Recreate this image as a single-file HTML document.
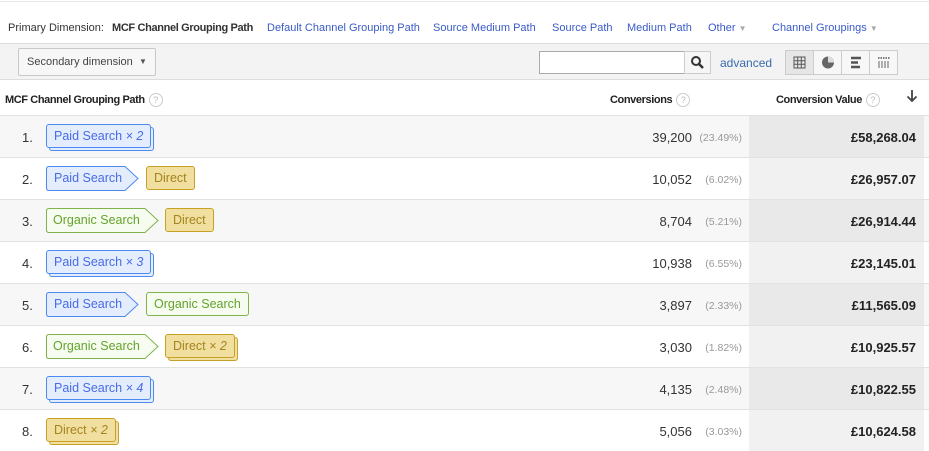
<!DOCTYPE html>
<html><head><meta charset="utf-8"><style>
*{margin:0;padding:0;box-sizing:border-box}
body{width:929px;height:450px;overflow:hidden;background:#fff;font-family:"Liberation Sans",Arial,sans-serif;font-size:11px;color:#222;position:relative}
.a{position:absolute;white-space:nowrap}
.lnk{color:#3a5bc7;font-size:11px}
.row{position:absolute;left:0;width:929px;height:42px;border-top:1px solid #e2e2e2}
.num{position:absolute;left:22px;top:14px;font-size:13px;color:#333}
.cv{position:absolute;right:237px;top:14px;font-size:13px;color:#333}
.pc{position:absolute;right:187px;top:16px;font-size:10.5px;color:#999}
.vb{position:absolute;left:749px;top:0;width:175px;height:41px}
.val{position:absolute;right:13px;top:14px;font-size:13px;font-weight:bold;color:#222}
.chip{position:absolute;top:8px;height:24px;border-radius:3px;border:1px solid;font-size:12.5px;line-height:23px;padding:0 7px}
.b{background:#e3edfd;border-color:#4d8af0;color:#4a6be6}
.g{background:#f6fcef;border-color:#80b34b;color:#64a22c}
.d{background:#f1df9f;border-color:#c7a125;color:#a5841f}
.b.st{box-shadow:3px 3px 0 -1px #e3edfd,3px 3px 0 0 #4d8af0}
.d.st{box-shadow:3px 3px 0 -1px #f1df9f,3px 3px 0 0 #c7a125}
i{font-style:italic}
svg.ar{position:absolute;top:8px}
.at{position:absolute;top:8px;font-size:12.5px;line-height:24px}
.q{display:inline-block;width:14px;height:14px;border:1px solid #ccc;border-radius:50%;color:#bbb;font-size:9px;text-align:center;line-height:12px;font-weight:normal;margin-left:4px;letter-spacing:0;vertical-align:middle}
.h{position:absolute;top:93px;font-size:11px;font-weight:bold;color:#222;letter-spacing:-0.4px;white-space:nowrap}
</style></head><body>
<div class="a" style="left:0;top:1px;width:929px;border-top:1px solid #e6e6e6"></div>
<div class="a" style="left:8px;top:22px;font-size:11px;color:#333">Primary Dimension:</div>
<div class="a" style="left:112px;top:22px;font-size:11px;font-weight:bold;color:#333;letter-spacing:-0.35px">MCF Channel Grouping Path</div>
<div class="a lnk" style="left:267px;top:22px">Default Channel Grouping Path</div>
<div class="a lnk" style="left:433px;top:22px">Source Medium Path</div>
<div class="a lnk" style="left:552px;top:22px">Source Path</div>
<div class="a lnk" style="left:627px;top:22px">Medium Path</div>
<div class="a lnk" style="left:708px;top:22px">Other <span style="color:#aaa;font-size:8px">▼</span></div>
<div class="a lnk" style="left:772px;top:22px">Channel Groupings <span style="color:#aaa;font-size:8px">▼</span></div>
<div class="a" style="left:0;top:43px;width:929px;height:37px;background:#f3f3f3;border-top:1px solid #ddd;border-bottom:1px solid #ddd"></div>
<div class="a" style="left:18px;top:48px;width:138px;height:28px;border:1px solid #c8c8c8;border-radius:2px;background:#f7f7f7;font-size:11px;color:#444;line-height:26px;padding-left:8px">Secondary dimension<span style="position:absolute;left:120px;top:0;font-size:8px;color:#555">▼</span></div>
<div class="a" style="left:539px;top:51px;width:146px;height:23px;border:1px solid #aaa;background:#fff"></div>
<div class="a" style="left:684px;top:51px;width:27px;height:23px;border:1px solid #ccc;background:#f6f6f6"><svg width="25" height="21"><circle cx="11" cy="9" r="4" fill="none" stroke="#333" stroke-width="2"/><path d="M14 12l4 4" stroke="#333" stroke-width="2.5"/></svg></div>
<div class="a" style="left:720px;top:56px;font-size:12px;color:#3a6ab0">advanced</div>
<div class="a" style="left:785px;top:50px;width:113px;height:25px;border:1px solid #ccc;background:#f7f7f7"></div>
<div class="a" style="left:785px;top:50px;width:29px;height:25px;background:#e6e6e6;border:1px solid #ccc"><svg width="27" height="23"><path d="M8 6h11v11H8zM8 9.7h11M8 13.3h11M11.7 6v11M15.3 6v11" fill="none" stroke="#555" stroke-width="1"/></svg></div>
<div class="a" style="left:813px;top:51px;width:28px;height:23px;border-left:1px solid #ccc"><svg width="28" height="23"><circle cx="14" cy="11.5" r="6" fill="#666"/><path d="M14 11.5V5.5A6 6 0 0 1 20 11.5Z" fill="#ddd"/></svg></div>
<div class="a" style="left:841px;top:51px;width:28px;height:23px;border-left:1px solid #ccc"><svg width="28" height="23"><path d="M9 7h10M9 11.5h7M9 16h9" stroke="#555" stroke-width="2.5"/></svg></div>
<div class="a" style="left:869px;top:51px;width:28px;height:23px;border-left:1px solid #ccc"><svg width="28" height="23"><path d="M8 7h12" stroke="#555" stroke-width="1.5" stroke-dasharray="1.5 1"/><path d="M9 10v7M12 10v7M15 10v7M18 10v7" stroke="#666" stroke-width="1"/></svg></div>
<div class="h" style="left:5px">MCF Channel Grouping Path<span class="q">?</span></div>
<div class="h" style="left:610px">Conversions<span class="q">?</span></div>
<div class="h" style="left:776px">Conversion Value<span class="q">?</span></div>
<div class="a" style="left:906px;top:88px"><svg width="14" height="16"><path d="M6 2v11M1.5 8.5L6 13l4.5-4.5" fill="none" stroke="#444" stroke-width="1.8"/></svg></div>

<div class="row" style="top:115px;background:#f7f7f7"><div class="vb" style="background:#e9e9e9"></div><span class="num">1.</span>
<div class="chip b st" style="left:46px">Paid Search <i>× 2</i></div>
<span class="cv">39,200</span><span class="pc">(23.49%)</span><span class="val">£58,268.04</span></div>

<div class="row" style="top:157px"><div class="vb" style="background:#f1f1f1"></div><span class="num">2.</span>
<svg class="ar" style="left:46px" width="94" height="25"><path d="M3 .5H79L92 12.5 79 24.5H3Q.5 24.5.5 22V3Q.5.5 3 .5Z" fill="#e3edfd" stroke="#4d8af0"/></svg><span class="at" style="left:54px;color:#4a6be6">Paid Search</span>
<div class="chip d" style="left:146px">Direct</div>
<span class="cv">10,052</span><span class="pc">(6.02%)</span><span class="val">£26,957.07</span></div>

<div class="row" style="top:199px;background:#f7f7f7"><div class="vb" style="background:#e9e9e9"></div><span class="num">3.</span>
<svg class="ar" style="left:46px" width="114" height="25"><path d="M3 .5H99L112 12.5 99 24.5H3Q.5 24.5.5 22V3Q.5.5 3 .5Z" fill="#f6fcef" stroke="#80b34b"/></svg><span class="at" style="left:53px;color:#64a22c">Organic Search</span>
<div class="chip d" style="left:165px">Direct</div>
<span class="cv">8,704</span><span class="pc">(5.21%)</span><span class="val">£26,914.44</span></div>

<div class="row" style="top:241px"><div class="vb" style="background:#f1f1f1"></div><span class="num">4.</span>
<div class="chip b st" style="left:46px">Paid Search <i>× 3</i></div>
<span class="cv">10,938</span><span class="pc">(6.55%)</span><span class="val">£23,145.01</span></div>

<div class="row" style="top:283px;background:#f7f7f7"><div class="vb" style="background:#e9e9e9"></div><span class="num">5.</span>
<svg class="ar" style="left:46px" width="94" height="25"><path d="M3 .5H79L92 12.5 79 24.5H3Q.5 24.5.5 22V3Q.5.5 3 .5Z" fill="#e3edfd" stroke="#4d8af0"/></svg><span class="at" style="left:54px;color:#4a6be6">Paid Search</span>
<div class="chip g" style="left:146px">Organic Search</div>
<span class="cv">3,897</span><span class="pc">(2.33%)</span><span class="val">£11,565.09</span></div>

<div class="row" style="top:325px"><div class="vb" style="background:#f1f1f1"></div><span class="num">6.</span>
<svg class="ar" style="left:46px" width="114" height="25"><path d="M3 .5H99L112 12.5 99 24.5H3Q.5 24.5.5 22V3Q.5.5 3 .5Z" fill="#f6fcef" stroke="#80b34b"/></svg><span class="at" style="left:53px;color:#64a22c">Organic Search</span>
<div class="chip d st" style="left:165px">Direct <i>× 2</i></div>
<span class="cv">3,030</span><span class="pc">(1.82%)</span><span class="val">£10,925.57</span></div>

<div class="row" style="top:367px;background:#f7f7f7"><div class="vb" style="background:#e9e9e9"></div><span class="num">7.</span>
<div class="chip b st" style="left:46px">Paid Search <i>× 4</i></div>
<span class="cv">4,135</span><span class="pc">(2.48%)</span><span class="val">£10,822.55</span></div>

<div class="row" style="top:409px"><div class="vb" style="background:#f1f1f1"></div><span class="num">8.</span>
<div class="chip d st" style="left:46px">Direct <i>× 2</i></div>
<span class="cv">5,056</span><span class="pc">(3.03%)</span><span class="val">£10,624.58</span></div>
</body></html>
